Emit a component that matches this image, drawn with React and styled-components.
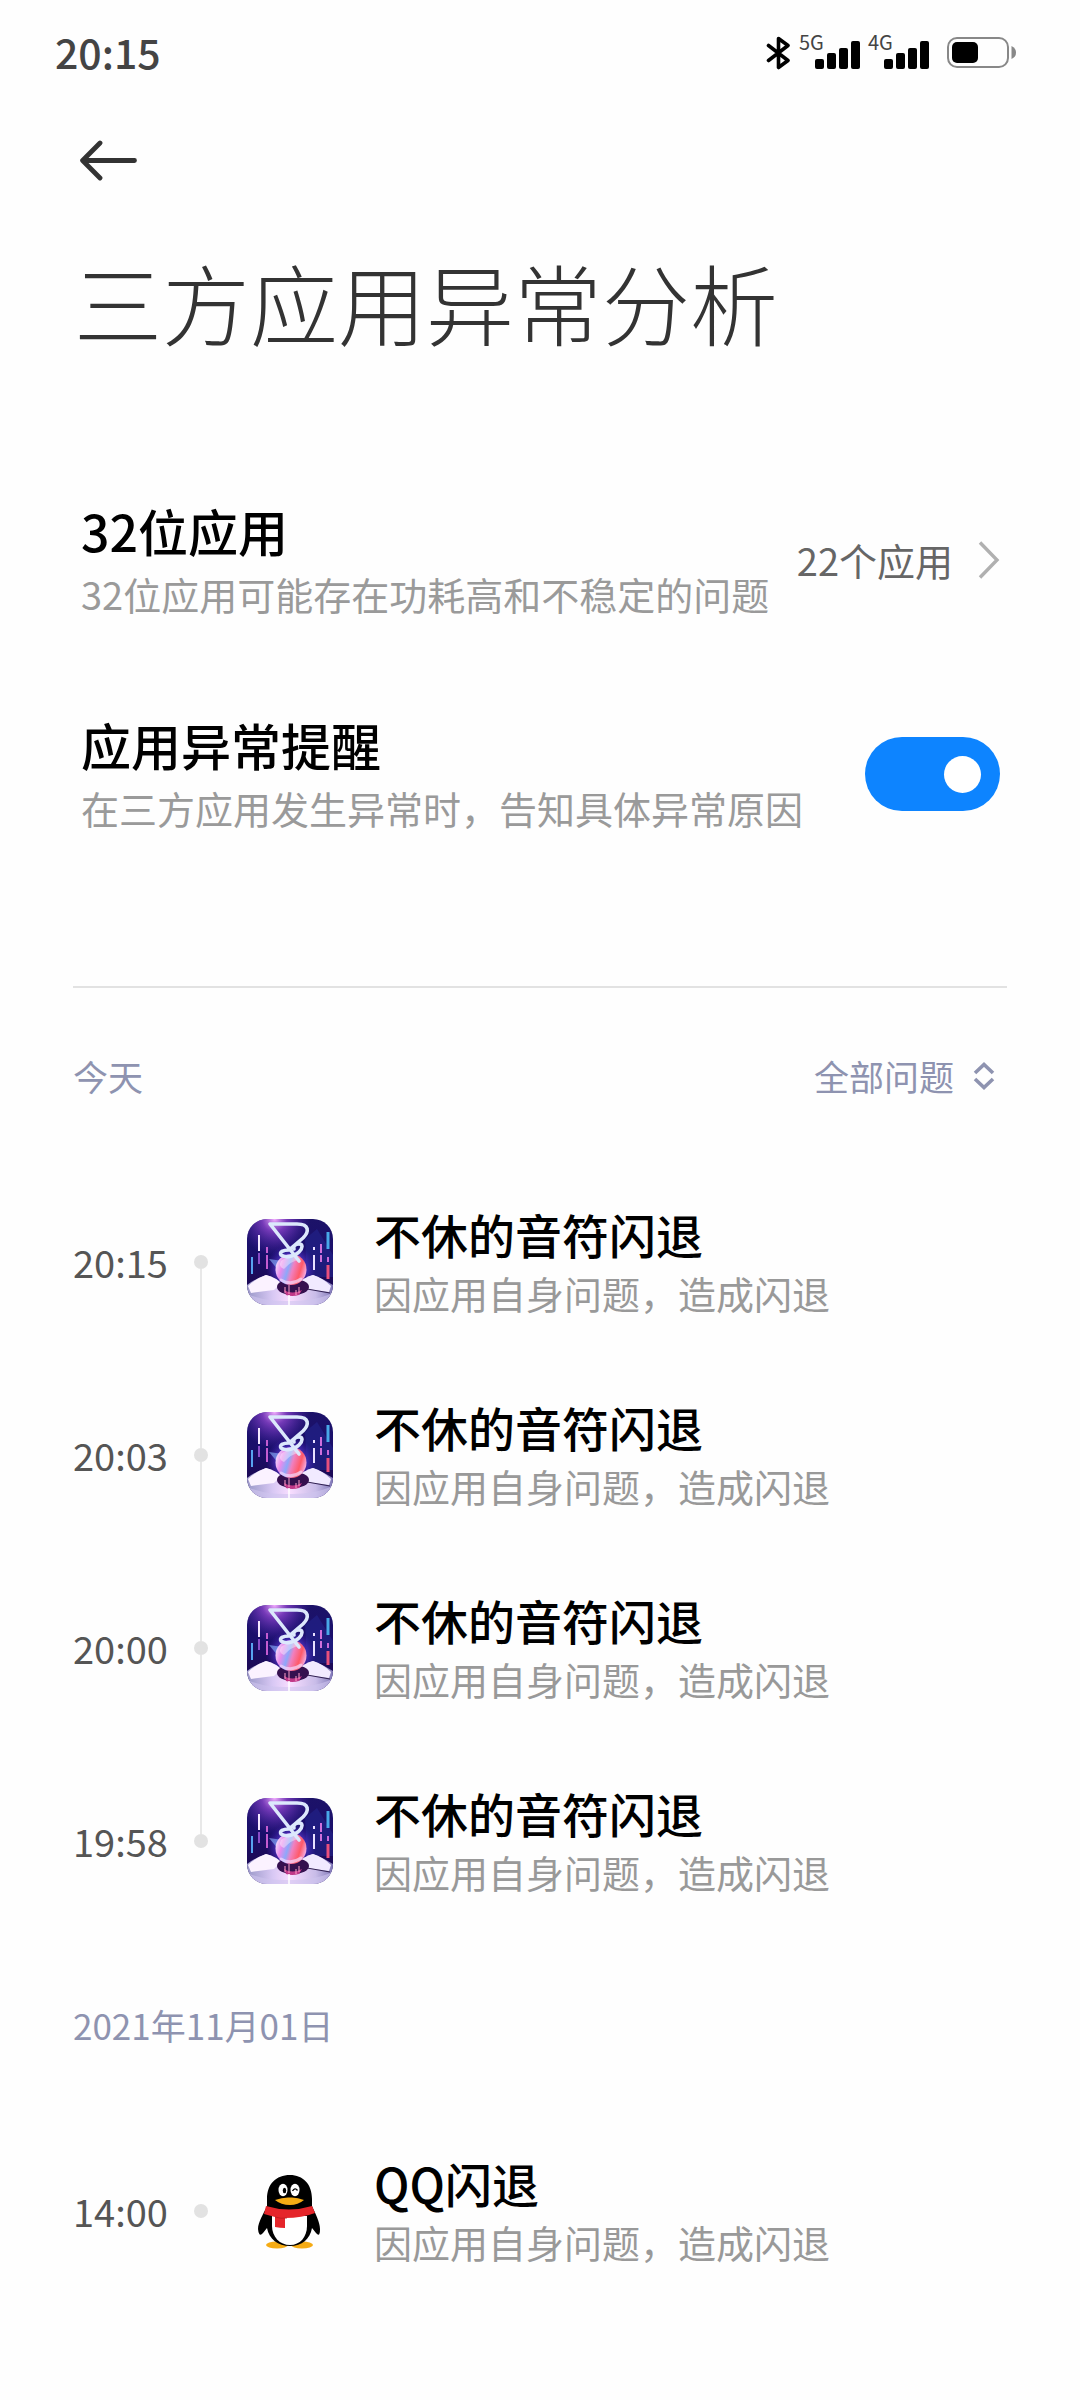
import React, { useState } from 'react';
import styled, { createGlobalStyle } from 'styled-components';

const GlobalStyle = createGlobalStyle`
  * {
    box-sizing: border-box;
  }

  body {
    margin: 0;
    background-color: #fefefe;
    color: #000;
    font-family: "Noto Sans CJK SC", "Noto Sans", sans-serif;
  }

  h1, h2, h3, p, ul {
    margin: 0;
    padding: 0;
  }

  svg {
    display: block;
    flex-shrink: 0;
  }
`;

const Page = styled.div`
  min-height: 100vh;
  padding-bottom: 80px;
`;

const StatusBar = styled.header`
  display: flex;
  align-items: center;
  justify-content: space-between;
  height: 105px;
  padding: 0 64px 0 55px;
`;

const Clock = styled.span`
  padding-bottom: 4px;
  font-size: 41px;
  line-height: 56px;
  font-weight: 500;
  color: #444;
`;

const StatusIcons = styled.div`
  display: flex;
  align-items: center;
`;

const Signal = styled.div`
  display: flex;
  align-items: flex-end;
  height: 36px;
  margin-left: 8px;
`;

const Network = styled.span`
  align-self: flex-start;
  width: 16px;
  white-space: nowrap;
  font-size: 20px;
  line-height: 14px;
  color: #444;
`;

const BatteryWrap = styled.div`
  margin-left: 18px;
`;

const Toolbar = styled.nav`
  padding: 35px 80px 0;
`;

const BackButton = styled.button`
  display: block;
  padding: 0;
  border: 0;
  background: none;
  cursor: pointer;
`;

const PageTitle = styled.h1`
  margin: 68px 74px 100px;
  font-size: 88px;
  line-height: 104px;
  font-weight: 300;
  color: #333;
`;

const Setting = styled.div`
  display: flex;
  align-items: center;
  justify-content: space-between;
  padding: 43px 80px 43px 81px;
  color: inherit;
  text-decoration: none;
`;

const SettingTitle = styled.h2`
  font-size: 50px;
  line-height: 68px;
  font-weight: 500;
`;

const SettingText = styled.p`
  font-size: 38px;
  line-height: 60px;
  color: #9a9a9a;
`;

const SettingValue = styled.span`
  display: flex;
  align-items: center;
  gap: 25px;
  flex-shrink: 0;
  font-size: 38px;
  line-height: 60px;
  color: #666;
`;

const Switch = styled.input`
  appearance: none;
  display: flex;
  align-items: center;
  justify-content: ${(props) => (props.checked ? 'flex-end' : 'flex-start')};
  flex-shrink: 0;
  width: 135px;
  height: 74px;
  margin: 0;
  padding: 0 19px;
  border-radius: 37px;
  background-color: ${(props) => (props.checked ? '#0d84ff' : '#e6e6e6')};
  cursor: pointer;

  &::before {
    content: "";
    width: 37px;
    height: 37px;
    border-radius: 50%;
    background-color: white;
  }
`;

const Divider = styled.hr`
  height: 2px;
  margin: 105px 73px 0;
  border: 0;
  background-color: #e2e2e2;
`;

const Group = styled.section`
  padding: 62px 73px 0;
`;

const GroupHeader = styled.div`
  display: flex;
  align-items: center;
  justify-content: space-between;
  margin-bottom: 63px;
  padding-right: 12px;
`;

const GroupLabel = styled.h2`
  font-size: 35px;
  line-height: 52px;
  font-weight: 400;
  color: #8e93b0;
`;

const Filter = styled.label`
  display: flex;
  align-items: center;
  gap: 18px;
`;

const FilterSelect = styled.select`
  appearance: none;
  height: 52px;
  padding: 0;
  border: 0;
  background: none;
  font-family: inherit;
  font-size: 35px;
  line-height: 52px;
  color: #8e93b0;
  cursor: pointer;
`;

const Events = styled.ul`
  list-style: none;
`;

const Event = styled.li`
  display: flex;
  align-items: center;
  height: 193px;
`;

const Time = styled.time`
  width: 121px;
  font-size: 38px;
  line-height: 56px;
  color: #555;
`;

const Rail = styled.div`
  display: flex;
  flex-direction: column;
  align-items: center;
  align-self: stretch;
  width: 14px;
  margin-right: 39px;
`;

const RailLine = styled.div`
  flex: 1;
  width: 2px;
  background-color: ${(props) => (props.$visible ? '#e8e8e8' : 'transparent')};
`;

const RailDot = styled.div`
  width: 14px;
  height: 14px;
  border-radius: 50%;
  background-color: #e2e2e2;
`;

const EventBody = styled.div`
  margin-left: 41px;
`;

const EventTitle = styled.h3`
  font-size: 47px;
  line-height: 62px;
  font-weight: 500;
`;

const EventText = styled.p`
  font-size: 38px;
  line-height: 56px;
  color: #999;
`;

const SharedDefs = styled.svg`
  position: absolute;
`;

const today = [
  { time: '20:15', app: 'music', title: '不休的音符闪退' },
  { time: '20:03', app: 'music', title: '不休的音符闪退' },
  { time: '20:00', app: 'music', title: '不休的音符闪退' },
  { time: '19:58', app: 'music', title: '不休的音符闪退' },
];

const earlier = [{ time: '14:00', app: 'qq', title: 'QQ闪退' }];

function BluetoothIcon() {
  return (
    <svg width="25" height="36" viewBox="0 0 25 36" fill="none" stroke="#000" strokeWidth="3.6" strokeLinejoin="round" strokeLinecap="round">
      <path d="M2.5 10.5 L22 25.5 L12.5 32.5 V3.5 L22 10.5 L2.5 25.5" />
    </svg>
  );
}

function SignalBars() {
  return (
    <svg width="45" height="32" viewBox="0 0 45 32" fill="#000">
      <rect x="0" y="20" width="9" height="10" rx="2" />
      <rect x="12" y="14" width="9" height="16" rx="2" />
      <rect x="24" y="9" width="9" height="21" rx="2" />
      <rect x="36" y="2" width="9" height="28" rx="2" />
    </svg>
  );
}

function BatteryIcon() {
  return (
    <svg width="69" height="32" viewBox="0 0 69 32">
      <rect x="1" y="1" width="60" height="29" rx="9" fill="none" stroke="#888" strokeWidth="2" />
      <rect x="5" y="5" width="26" height="21" rx="5" fill="#000" />
      <path d="M64.5 9 Q69 11 69 15.5 Q69 20 64.5 22 Z" fill="#888" />
    </svg>
  );
}

function BackIcon() {
  return (
    <svg width="58" height="41" viewBox="0 0 58 41" fill="none" stroke="#333" strokeWidth="4.8" strokeLinecap="round" strokeLinejoin="round">
      <path d="M20 3 L2.6 20.5 L20 38 M3 20.5 H54.5" />
    </svg>
  );
}

function ChevronIcon() {
  return (
    <svg width="22" height="38" viewBox="0 0 22 38" fill="none" stroke="#b0b0b0" strokeWidth="3.4">
      <path d="M2 1.5 L19 19 L2 36.5" />
    </svg>
  );
}

function SortIcon() {
  return (
    <svg width="22" height="28" viewBox="0 0 22 28" fill="none" stroke="#8e93b0" strokeWidth="3.6">
      <path d="M2 11 L11 2.5 L20 11 M2 17 L11 25.5 L20 17" />
    </svg>
  );
}

function MusicDefs() {
  return (
    <SharedDefs width="0" height="0" aria-hidden="true">
      <defs>
        <clipPath id="music-shape">
          <rect width="86" height="86" rx="20" />
        </clipPath>
        <linearGradient id="music-sky" x1="0" y1="0" x2="0" y2="1">
          <stop offset="0" stopColor="#1c1268" />
          <stop offset="0.4" stopColor="#1a0f6c" />
          <stop offset="0.7" stopColor="#1c0a58" />
        </linearGradient>
        <radialGradient id="music-glow" cx="0.32" cy="0" r="0.42">
          <stop offset="0" stopColor="#f3b0ff" />
          <stop offset="0.35" stopColor="#9a4ad8" stopOpacity="0.7" />
          <stop offset="1" stopColor="#5a2ac0" stopOpacity="0" />
        </radialGradient>
        <radialGradient id="music-halo">
          <stop offset="0.5" stopColor="#6a4cf0" stopOpacity="0.7" />
          <stop offset="1" stopColor="#4a20c0" stopOpacity="0" />
        </radialGradient>
        <linearGradient id="music-ball" x1="0" y1="0.3" x2="1" y2="0.6">
          <stop offset="0" stopColor="#f4e0fc" />
          <stop offset="0.22" stopColor="#e88cec" />
          <stop offset="0.42" stopColor="#8ca8fa" />
          <stop offset="0.56" stopColor="#f080c0" />
          <stop offset="0.8" stopColor="#ff5a68" />
          <stop offset="1" stopColor="#f4b0e8" />
        </linearGradient>
        <linearGradient id="music-floor" x1="0" y1="0" x2="1" y2="0">
          <stop offset="0" stopColor="#9a98c8" />
          <stop offset="0.3" stopColor="#d8c8f4" />
          <stop offset="0.5" stopColor="#f8ddff" />
          <stop offset="0.8" stopColor="#c8bce8" />
          <stop offset="1" stopColor="#8078b8" />
        </linearGradient>
      </defs>
    </SharedDefs>
  );
}

function MusicIcon() {
  return (
    <svg width="86" height="86" viewBox="0 0 86 86" fill="none">
      <g clipPath="url(#music-shape)">
        <rect width="86" height="86" fill="url(#music-sky)" />
        <path d="M58 20 L70 10 L86 36 V58 H60 Z" fill="#23248c" opacity="0.6" />
        <rect width="86" height="86" fill="url(#music-glow)" />
        <circle cx="44" cy="50" r="25" fill="url(#music-halo)" />
        <g strokeWidth="2">
          <path d="M12 16 V32" stroke="#f4e8ff" />
          <path d="M12 34 V45" stroke="#8a4cc8" />
          <path d="M20 28 V34 M20 36 V50" stroke="#c45cd0" />
          <path d="M5 38 V55" stroke="#58a4f0" />
          <path d="M67 28 V31 M67 36 V51" stroke="#e8e0ff" />
          <path d="M74 25 V34 M74 36 V43" stroke="#d070dc" />
          <path d="M81 13 V30" stroke="#48a8e8" strokeWidth="3" />
          <path d="M81 38 V43" stroke="#c868d8" />
          <path d="M81 46 V60" stroke="#e8507c" strokeWidth="3" />
        </g>
        <path d="M0 66 Q8 60 19 56 Q29 58 36 66 L50 66 Q57 58 66 56 Q76 60 86 66 V86 H0 Z" fill="url(#music-floor)" />
        <path d="M1 67 Q8 60 19 56 Q27 58 34 64 L27 71 L4 74 Z" fill="#fbf2ff" />
        <path d="M51 65 Q58 58 66 56 Q76 59 84 67 L82 73 L60 70 Z" fill="#f1eaff" />
        <path d="M60 70 L83 74" stroke="#302050" strokeWidth="1" />
        <ellipse cx="46" cy="68" rx="16" ry="8" fill="#35104f" />
        <path d="M37 71 Q45 76 55 71 L52 76 Q45 78 39 76 Z" fill="#c03888" />
        <path d="M38 68 V74 M42 66 V75 M49 71 V76 M52 68 V74" stroke="#ff9fc8" strokeWidth="1" />
        <path d="M0 75 Q20 83 42 82 Q65 83 86 74 V86 H0 Z" fill="#cfc4ef" opacity="0.6" />
        <path d="M42 76 V86" stroke="#fff" strokeWidth="1.5" />
        <path d="M22 40 L36 42 L32 52 Z" fill="#8ab8ff" opacity="0.6" />
        <circle cx="44" cy="50.5" r="15.5" fill="url(#music-ball)" />
        <path d="M34 42 Q42 35 54 40 Q44 42 37 50 Q31 48 34 42 Z" fill="#fff" opacity="0.4" />
        <path d="M34 61 Q44 67 54 60" stroke="#f4dcff" strokeWidth="3" opacity="0.7" strokeLinecap="round" />
        <g stroke="#dce8fc" strokeWidth="3.6" strokeLinejoin="round" strokeLinecap="round">
          <path d="M52 42 L23 5 H50 C63 5 62 13 56 19 L42 31 C36 31 32 33 34 36 C38 39 47 38 52 33 C56 29 56 25 52 25 C48 25 46 27 47 30" />
        </g>
      </g>
    </svg>
  );
}

function PenguinIcon() {
  return (
    <svg width="86" height="86" viewBox="0 0 86 86">
      <ellipse cx="30" cy="77" rx="11" ry="3.5" fill="#f5ab14" />
      <ellipse cx="55" cy="77" rx="11" ry="3.5" fill="#f5ab14" />
      <path d="M43 7 C29 7 20 16 20 31 V38 C17 45 11 54 11 61 Q12 70 16 65 L20 60 C22 71 31 78 43 78 C55 78 63 71 65 60 L69 65 Q73 70 73 61 C73 54 68 45 65 38 V31 C65 16 56 7 43 7 Z" fill="#000" />
      <path d="M25 48 H60 V58 C60 69 53 77 43 77 C33 77 25 69 25 58 Z" fill="#fff" />
      <path d="M19 38 Q42 45 65 38 L68 45 Q55 50 38 50 V60 Q33 60 28 59 V49 L17 46 Z" fill="#e5252a" />
      <path d="M28 49 Q34 51 40 50" stroke="#b91c20" strokeWidth="0.8" fill="none" />
      <ellipse cx="36" cy="22" rx="4.5" ry="6.2" fill="#fff" />
      <ellipse cx="48" cy="22" rx="4.5" ry="6.2" fill="#fff" />
      <ellipse cx="37.5" cy="22.5" rx="1.7" ry="2.7" fill="#000" />
      <path d="M45.5 23 Q48 19 50.5 22.5" stroke="#000" strokeWidth="1.4" fill="none" />
      <path d="M28 32 Q36 29 43 29.5 Q50 29 57 32 Q51 37 43 37 Q34 37 28 32 Z" fill="#f5ab14" />
    </svg>
  );
}

function EventList({ items }) {
  return (
    <Events>
      {items.map((item, index) => (
        <Event key={item.time}>
          <Time>{item.time}</Time>
          <Rail>
            <RailLine $visible={index > 0} />
            <RailDot />
            <RailLine $visible={index < items.length - 1} />
          </Rail>
          {item.app === 'qq' ? <PenguinIcon /> : <MusicIcon />}
          <EventBody>
            <EventTitle>{item.title}</EventTitle>
            <EventText>因应用自身问题，造成闪退</EventText>
          </EventBody>
        </Event>
      ))}
    </Events>
  );
}

function App() {
  const [remind, setRemind] = useState(true);

  return (
    <Page>
      <GlobalStyle />
      <MusicDefs />
      <StatusBar>
        <Clock>20:15</Clock>
        <StatusIcons>
          <BluetoothIcon />
          <Signal>
            <Network>5G</Network>
            <SignalBars />
          </Signal>
          <Signal>
            <Network>4G</Network>
            <SignalBars />
          </Signal>
          <BatteryWrap>
            <BatteryIcon />
          </BatteryWrap>
        </StatusIcons>
      </StatusBar>
      <Toolbar>
        <BackButton type="button" aria-label="返回">
          <BackIcon />
        </BackButton>
      </Toolbar>
      <main>
        <PageTitle>三方应用异常分析</PageTitle>
        <Setting as="a" href="#apps">
          <div>
            <SettingTitle>32位应用</SettingTitle>
            <SettingText>32位应用可能存在功耗高和不稳定的问题</SettingText>
          </div>
          <SettingValue>
            22个应用
            <ChevronIcon />
          </SettingValue>
        </Setting>
        <Setting as="label" htmlFor="remind">
          <div>
            <SettingTitle>应用异常提醒</SettingTitle>
            <SettingText>在三方应用发生异常时，告知具体异常原因</SettingText>
          </div>
          <Switch
            id="remind"
            type="checkbox"
            checked={remind}
            onChange={(e) => setRemind(e.target.checked)}
          />
        </Setting>
        <Divider />
        <Group>
          <GroupHeader>
            <GroupLabel>今天</GroupLabel>
            <Filter>
              <FilterSelect aria-label="问题类型" defaultValue="all">
                <option value="all">全部问题</option>
              </FilterSelect>
              <SortIcon />
            </Filter>
          </GroupHeader>
          <EventList items={today} />
        </Group>
        <Group>
          <GroupHeader>
            <GroupLabel>2021年11月01日</GroupLabel>
          </GroupHeader>
          <EventList items={earlier} />
        </Group>
      </main>
    </Page>
  );
}

export default App;
